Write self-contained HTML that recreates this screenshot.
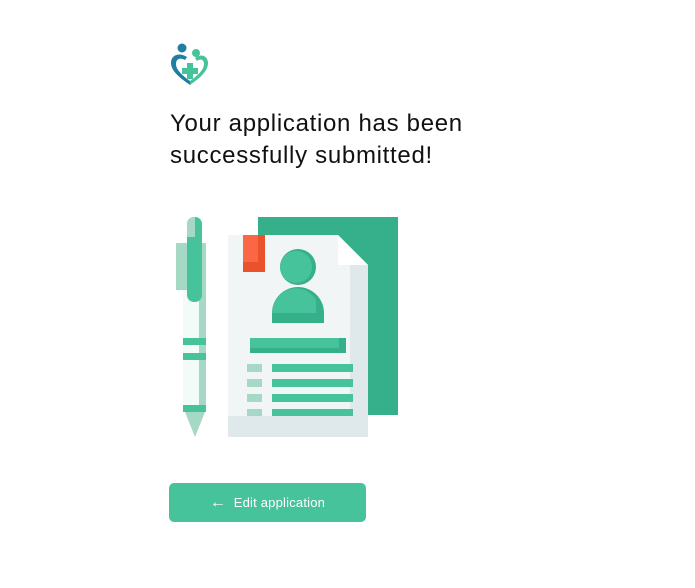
<!DOCTYPE html>
<html><head><style>
body{margin:0;width:695px;height:588px;background:#fff;position:relative;font-family:"Liberation Sans",sans-serif;overflow:hidden}
.t{position:absolute;left:170px;top:108px;font-size:24px;line-height:32px;color:#111;letter-spacing:0.7px}
.btn{position:absolute;left:169px;top:483px;width:197px;height:39px;background:#47c39b;border-radius:5px;color:#fff;font-size:13px;line-height:39px;text-align:center;letter-spacing:0.2px}
.btn b{font-size:16px;font-weight:bold}
</style></head><body>
<svg style="position:absolute;left:160px;top:35px" width="60" height="60" viewBox="0 0 60 60">
<circle cx="22" cy="13" r="4.5" fill="#1f7fa0"/>
<circle cx="36" cy="18" r="4" fill="#47c39b"/>
<path d="M30 50 C20 43 11 36 11 28 C11 20 19 17 27 22 L25 25 C20 22 16 24 16 29 C16 35 23 41 30 46Z" fill="#1f7fa0"/>
<path d="M30 50 C40 43 48 36 48 28 C48 21 41 18 35 23 L37 26 C41 23 44 25 44 29 C44 35 37 41 30 46Z" fill="#47c39b"/>
<path d="M27 28h6v5h5v6h-5v5h-6v-5h-5v-6h5z" fill="#47c39b"/>
</svg>
<div class="t">Your application has been<br>successfully submitted!</div>
<svg style="position:absolute;left:0;top:0" width="695" height="588">
<rect x="258" y="217" width="140" height="198" fill="#36b08a"/>
<path d="M228 235H338L368 265V437H228Z" fill="#f1f5f6"/>
<rect x="350" y="265" width="18" height="172" fill="#dfe8ea"/>
<rect x="228" y="416" width="140" height="21" fill="#dfe8ea"/>
<path d="M338 235L368 265H338Z" fill="#fff"/>
<rect x="243" y="235" width="22" height="37" fill="#e9522a"/>
<rect x="243" y="235" width="15" height="27" fill="#fb6647"/>
<circle cx="298" cy="267" r="18" fill="#36b08a"/>
<circle cx="296" cy="267" r="16" fill="#47c39b"/>
<path d="M272 323V313A26 26 0 0 1 324 313V323Z" fill="#36b08a"/>
<path d="M272 313A24 26 0 0 1 316 300V313Z" fill="#47c39b"/>
<rect x="250" y="338" width="96" height="15" fill="#36b08a"/>
<rect x="250" y="338" width="89" height="10" fill="#47c39b"/>
<g fill="#a6d8c6"><rect x="247" y="364" width="15" height="8"/><rect x="247" y="379" width="15" height="8"/><rect x="247" y="394" width="15" height="8"/><rect x="247" y="409" width="15" height="7"/></g>
<g fill="#47c39b"><rect x="272" y="364" width="81" height="8"/><rect x="272" y="379" width="81" height="8"/><rect x="272" y="394" width="81" height="8"/><rect x="272" y="409" width="81" height="7"/></g>
<rect x="183" y="243" width="23" height="162" fill="#f2fbf8"/>
<rect x="199" y="243" width="7" height="162" fill="#a6d8c6"/>
<rect x="176" y="243" width="12" height="47" fill="#a6d8c6"/>
<rect x="187" y="217" width="15" height="85" rx="7" fill="#47c39b"/>
<path d="M187 237V224A7 7 0 0 1 195 217V237Z" fill="#a6d8c6"/>
<rect x="183" y="338" width="23" height="7" fill="#47c39b"/>
<rect x="183" y="353" width="23" height="7" fill="#47c39b"/>
<rect x="183" y="405" width="23" height="7" fill="#47c39b"/>
<path d="M185 412H205L195 437Z" fill="#a6d8c6"/>
</svg>
<div class="btn"><b>&#8592;</b>&nbsp; Edit application</div>
</body></html>
